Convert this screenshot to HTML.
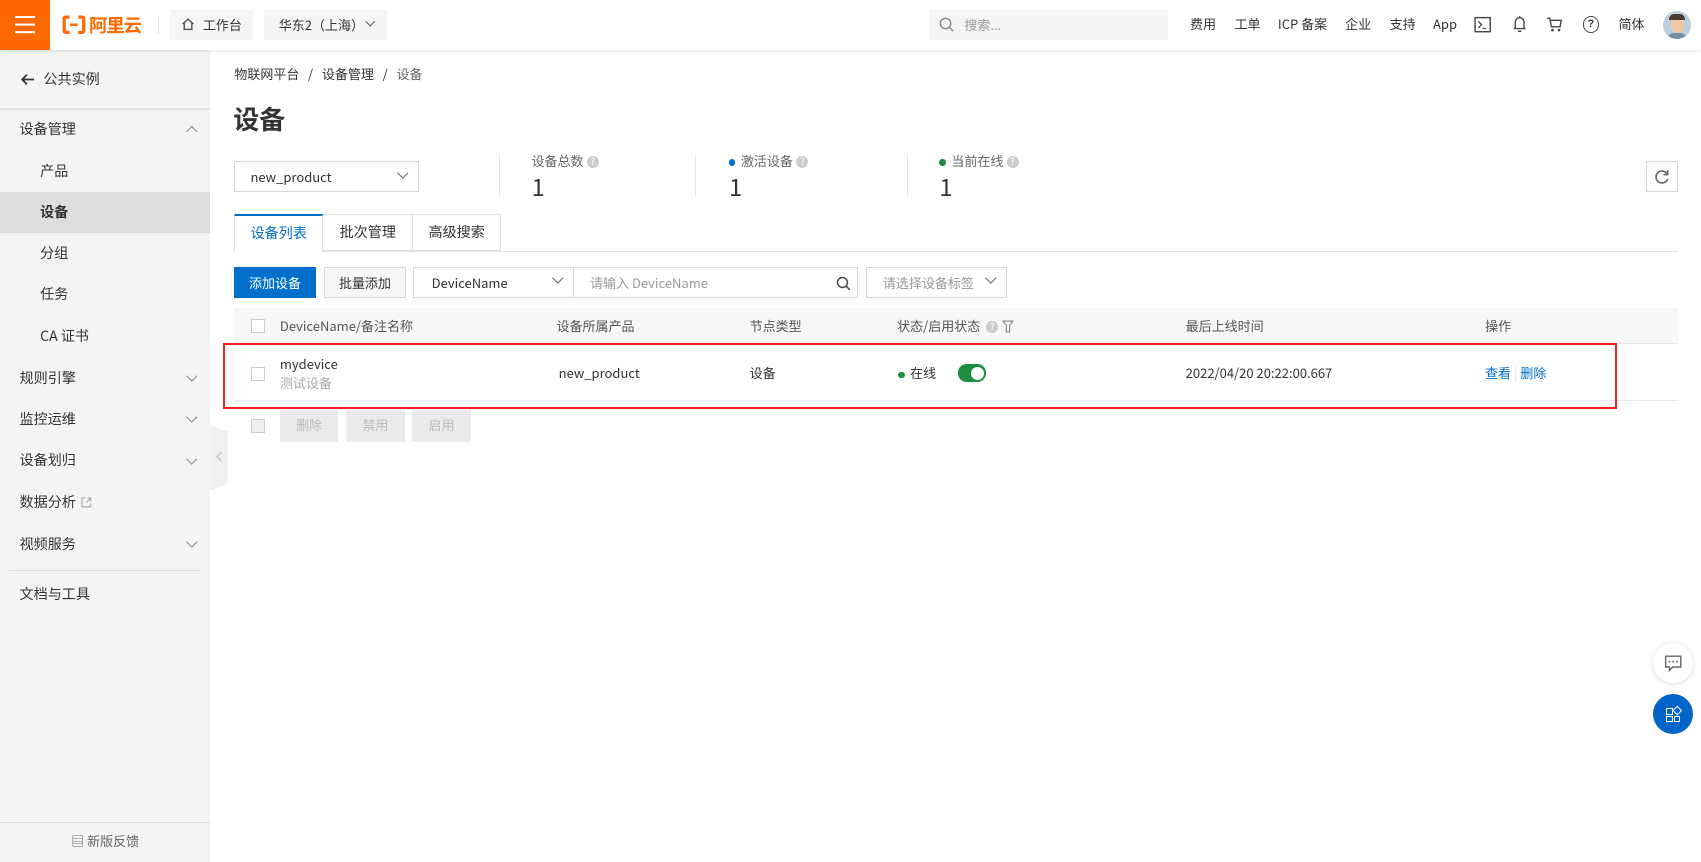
<!DOCTYPE html>
<html><head><meta charset="utf-8"><style>
*{box-sizing:border-box;margin:0;padding:0}
html,body{width:1701px;height:862px;overflow:hidden;background:#fff}
#w{zoom:1.0848;width:1568px;height:795px;position:relative;font-family:"Noto Sans CJK SC","Liberation Sans",sans-serif;font-size:12px;line-height:16px;color:#333}
.a{position:absolute}
.hd{left:0;top:0;width:1568px;height:46px;background:#fff;box-shadow:0 1px 4px rgba(0,0,0,.15);z-index:5}
.sb{left:0;top:46px;width:194px;height:749px;background:#f4f4f4}
.si{position:absolute;left:18px;font-size:13px;color:#333;line-height:16px}
.ch{position:absolute;left:173px;width:7px;height:7px;border-right:1.2px solid #888;border-bottom:1.2px solid #888;transform:rotate(45deg)}
.nv{top:14px;font-size:12px;color:#333;line-height:16px}
.btn{position:absolute;height:29px;line-height:27px;text-align:center;border:1px solid #d7d7d7;background:#f7f7f7;font-size:12px}
.th{position:absolute;top:292px;color:#555}
.cb{position:absolute;width:13px;height:13px;border:1px solid #ccc;background:#fff}
.dd{position:absolute;width:7px;height:7px;border-right:1.2px solid #666;border-bottom:1.2px solid #666;transform:rotate(45deg)}
.q{display:inline-block;width:11px;height:11px;border-radius:50%;background:#ccc;color:#fff;font-size:9px;line-height:11px;text-align:center;vertical-align:middle;margin-left:3px}
</style></head><body><div id="w">
<div class="a hd">
 <div class="a" style="left:0;top:0;width:46px;height:46px;background:#ff6a00"></div>
 <div class="a" style="left:14px;top:15px;width:18px;height:2px;background:#fff;box-shadow:0 7px 0 #fff,0 14px 0 #fff"></div>
 <svg class="a" style="left:57px;top:14px" width="22" height="18" viewBox="0 0 22 18"><path d="M7 2H3.5Q2 2 2 3.5v11Q2 16 3.5 16H7M15 2h3.5Q20 2 20 3.5v11q0 1.5-1.5 1.5H15" fill="none" stroke="#ff6a00" stroke-width="3"/><rect x="7.5" y="7.8" width="7" height="2.4" fill="#ff6a00"/></svg>
 <div class="a" style="left:82px;top:11px;font-size:17px;line-height:24px;font-weight:bold;color:#ff6a00;letter-spacing:-1px">阿里云</div>
 <div class="a" style="left:146px;top:15px;width:1px;height:16px;background:#e0e0e0"></div>
 <div class="a" style="left:157px;top:9px;width:76px;height:28px;background:#f5f5f6;line-height:28px;padding-left:30px;color:#333">工作台</div>
 <svg class="a" style="left:167px;top:16px" width="13" height="13" viewBox="0 0 13 13"><path d="M1.5 6.5 6.5 2l5 4.5M3 5.5V11.5h7V5.5" fill="none" stroke="#555" stroke-width="1.3"/></svg>
 <div class="a" style="left:243px;top:9px;width:114px;height:28px;background:#f5f5f6;line-height:28px;padding-left:14px;color:#333">华东2（上海）</div>
 <div class="dd" style="left:338px;top:17px;width:6px;height:6px;border-color:#555"></div>
 <div class="a" style="left:856px;top:9px;width:221px;height:28px;background:#f5f5f6;line-height:28px;padding-left:33px;color:#999">搜索...</div>
 <svg class="a" style="left:866px;top:16px" width="14" height="14" viewBox="0 0 14 14"><circle cx="6" cy="6" r="4.8" fill="none" stroke="#888" stroke-width="1.3"/><path d="M9.5 9.5 13 13" stroke="#888" stroke-width="1.3"/></svg>
 <div class="a nv" style="left:1097px">费用</div>
 <div class="a nv" style="left:1138px">工单</div>
 <div class="a nv" style="left:1178px">ICP 备案</div>
 <div class="a nv" style="left:1240px">企业</div>
 <div class="a nv" style="left:1281px">支持</div>
 <div class="a nv" style="left:1321px">App</div>
 <svg class="a" style="left:1359px;top:15px" width="16" height="16" viewBox="0 0 16 16"><rect x="1" y="1.5" width="14" height="13" fill="none" stroke="#444" stroke-width="1.3"/><path d="M4 5l3 3-3 3M8 11.5h3" fill="none" stroke="#444" stroke-width="1.2"/></svg>
 <svg class="a" style="left:1393px;top:14px" width="16" height="17" viewBox="0 0 16 17"><path d="M4 12V6.5a4 4 0 0 1 8 0V12M2.5 12.5h11M6.5 15h3M8 1v1.5" fill="none" stroke="#444" stroke-width="1.3"/></svg>
 <svg class="a" style="left:1425px;top:15px" width="16" height="16" viewBox="0 0 16 16"><path d="M1 2h2.5l1.5 8h8l1-6H4.2" fill="none" stroke="#444" stroke-width="1.3"/><circle cx="6" cy="13" r="1.2" fill="#444"/><circle cx="12" cy="13" r="1.2" fill="#444"/></svg>
 <div class="a" style="left:1459px;top:15px;width:15px;height:15px;border:1.3px solid #444;border-radius:50%;font-size:10px;line-height:13px;text-align:center;font-weight:bold;font-family:'Liberation Sans',sans-serif">?</div>
 <div class="a nv" style="left:1492px">简体</div>
 <div class="a" style="left:1533px;top:10px;width:26px;height:26px;border-radius:50%;background:#b9cfdc;overflow:hidden"><div class="a" style="left:7px;top:5px;width:12px;height:15px;border-radius:6px;background:#f1c9a5"></div><div class="a" style="left:6px;top:3px;width:14px;height:5px;border-radius:5px 5px 0 0;background:#4a3a30"></div><div class="a" style="left:3px;top:20px;width:20px;height:10px;border-radius:8px 8px 0 0;background:#6d8ea3"></div></div>
</div>
<div class="a sb">
 <svg class="a" style="left:18px;top:21px" width="14" height="12" viewBox="0 0 14 12"><path d="M13 6H2M6.5 1.5 2 6l4.5 4.5" fill="none" stroke="#333" stroke-width="1.6"/></svg>
 <div class="si" style="top:19px;left:40px">公共实例</div>
 <div class="a" style="left:0;top:54px;width:194px;height:1px;background:#e3e3e3"></div>
 <div class="si" style="top:66px">设备管理</div><div class="ch" style="top:72px;transform:rotate(225deg)"></div>
 <div class="si" style="top:104px;left:37px">产品</div>
 <div class="a" style="left:0;top:131px;width:194px;height:38px;background:#dedede"></div>
 <div class="si" style="top:142px;left:37px;font-weight:bold">设备</div>
 <div class="si" style="top:180px;left:37px">分组</div>
 <div class="si" style="top:218px;left:37px">任务</div>
 <div class="si" style="top:256px;left:37px">CA 证书</div>
 <div class="si" style="top:295px">规则引擎</div><div class="ch" style="top:297px"></div>
 <div class="si" style="top:333px">监控运维</div><div class="ch" style="top:335px"></div>
 <div class="si" style="top:371px">设备划归</div><div class="ch" style="top:373px"></div>
 <div class="si" style="top:409px">数据分析</div>
 <svg class="a" style="left:75px;top:412px" width="10" height="10" viewBox="0 0 10 10"><path d="M4 1H1v8h8V6M6 1h3v3M9 1 5 5" fill="none" stroke="#aaa" stroke-width="1.1"/></svg>
 <div class="si" style="top:448px">视频服务</div><div class="ch" style="top:450px"></div>
 <div class="a" style="left:8px;top:479px;width:176px;height:1px;background:#ddd"></div>
 <div class="si" style="top:494px">文档与工具</div>
 <div class="a" style="left:0;top:712px;width:194px;height:1px;background:#ddd"></div>
 <div class="a" style="left:0;top:721px;width:194px;text-align:center;color:#666;font-size:12px">▤ 新版反馈</div>
</div>
<div class="a" style="left:194px;top:392px;width:16px;height:60px;background:#f0f0f0;clip-path:polygon(0 0,100% 10%,100% 90%,0 100%)"></div>
<div class="a" style="left:201px;top:418px;width:6px;height:6px;border-left:1.3px solid #bbb;border-bottom:1.3px solid #bbb;transform:rotate(45deg)"></div>

<div class="a" style="left:216px;top:60px;font-size:12px">物联网平台 &nbsp;&nbsp;/&nbsp;&nbsp; 设备管理 &nbsp;&nbsp;/&nbsp;&nbsp; <span style="color:#666">设备</span></div>
<div class="a" style="left:215px;top:94px;font-size:24px;line-height:32px;font-weight:bold;color:#333">设备</div>
<div class="a" style="left:216px;top:148px;width:170px;height:29px;border:1px solid #d7d7d7;line-height:27px;padding-left:14px">new_product</div>
<div class="dd" style="left:368px;top:156px"></div>
<div class="a" style="left:460px;top:142px;width:1px;height:40px;background:#e8e8e8"></div>
<div class="a" style="left:641px;top:142px;width:1px;height:40px;background:#e8e8e8"></div>
<div class="a" style="left:836px;top:142px;width:1px;height:40px;background:#e8e8e8"></div>
<div class="a" style="left:490px;top:140px;color:#666">设备总数<span class="q">?</span></div>
<div class="a" style="left:672px;top:140px;color:#666"><span style="display:inline-block;width:6px;height:6px;border-radius:50%;background:#0070cc;vertical-align:middle;margin-right:5px"></span>激活设备<span class="q">?</span></div>
<div class="a" style="left:866px;top:140px;color:#666"><span style="display:inline-block;width:6px;height:6px;border-radius:50%;background:#1e8e3e;vertical-align:middle;margin-right:5px"></span>当前在线<span class="q">?</span></div>
<div class="a" style="left:490px;top:159px;font-size:22px;line-height:26px;color:#333">1</div>
<div class="a" style="left:672px;top:159px;font-size:22px;line-height:26px;color:#333">1</div>
<div class="a" style="left:866px;top:159px;font-size:22px;line-height:26px;color:#333">1</div>
<div class="btn" style="left:1517px;top:148px;width:30px;background:#fff"></div>
<svg class="a" style="left:1524px;top:155px" width="16" height="16" viewBox="0 0 16 16"><path d="M13 5.5A5.5 5.5 0 1 0 13.5 10" fill="none" stroke="#666" stroke-width="1.5"/><path d="M13.5 2v4h-4" fill="none" stroke="#666" stroke-width="1.5"/></svg>

<div class="a" style="left:216px;top:231px;width:1331px;height:1px;background:#e0e0e0"></div>
<div class="a" style="left:216px;top:197px;width:82px;height:35px;border:1px solid #e0e0e0;border-top:2px solid #0070cc;border-bottom:none;background:#fff;text-align:center;line-height:32px;color:#0070cc;font-size:13px">设备列表</div>
<div class="a" style="left:298px;top:197px;width:83px;height:34px;border:1px solid #e0e0e0;border-left:none;text-align:center;line-height:33px;font-size:13px">批次管理</div>
<div class="a" style="left:380px;top:197px;width:82px;height:34px;border:1px solid #e0e0e0;text-align:center;line-height:33px;font-size:13px">高级搜索</div>

<div class="btn" style="left:216px;top:246px;width:75px;background:#0070cc;border-color:#0070cc;color:#fff">添加设备</div>
<div class="btn" style="left:299px;top:246px;width:75px">批量添加</div>
<div class="btn" style="left:381px;top:246px;width:148px;background:#fff;text-align:left;padding-left:16px">DeviceName</div>
<div class="dd" style="left:511px;top:253px"></div>
<div class="btn" style="left:528px;top:246px;width:263px;background:#fff;text-align:left;padding-left:15px;color:#999">请输入 DeviceName</div>
<svg class="a" style="left:771px;top:254px" width="14" height="14" viewBox="0 0 14 14"><circle cx="6" cy="6" r="4.6" fill="none" stroke="#444" stroke-width="1.3"/><path d="M9.4 9.4 12.8 12.8" stroke="#444" stroke-width="1.4"/></svg>
<div class="btn" style="left:798px;top:246px;width:130px;background:#fff;text-align:left;padding-left:15px;color:#999">请选择设备标签</div>
<div class="dd" style="left:910px;top:253px"></div>

<div class="a" style="left:216px;top:284px;width:1331px;height:33px;background:#f7f7f7;border-bottom:1px solid #e8e8e8"></div>
<div class="cb" style="left:231px;top:294px"></div>
<div class="th" style="left:258px">DeviceName/备注名称</div>
<div class="th" style="left:513px">设备所属产品</div>
<div class="th" style="left:691px">节点类型</div>
<div class="th" style="left:827px">状态/启用状态 <span class="q" style="margin:0 3px">?</span></div>
<svg class="a" style="left:924px;top:295px" width="11" height="12" viewBox="0 0 11 12"><path d="M1 1h9L7 5v6H4V5z" fill="none" stroke="#888" stroke-width="1.1"/></svg>
<div class="th" style="left:1093px">最后上线时间</div>
<div class="th" style="left:1369px">操作</div>
<div class="a" style="left:216px;top:369px;width:1331px;height:1px;background:#e8e8e8"></div>
<div class="cb" style="left:231px;top:338px"></div>
<div class="a" style="left:258px;top:327px">mydevice</div>
<div class="a" style="left:258px;top:345px;color:#aaa">测试设备</div>
<div class="a" style="left:515px;top:336px">new_product</div>
<div class="a" style="left:691px;top:336px">设备</div>
<div class="a" style="left:828px;top:336px"><span style="display:inline-block;width:6px;height:6px;border-radius:50%;background:#1e8e3e;vertical-align:middle;margin-right:5px"></span>在线</div>
<div class="a" style="left:883px;top:336px;width:26px;height:16px;border-radius:8px;background:#1e8e3e"><div class="a" style="left:12px;top:2px;width:12px;height:12px;border-radius:50%;background:#fff"></div></div>
<div class="a" style="left:1093px;top:336px">2022/04/20 20:22:00.667</div>
<div class="a" style="left:1369px;top:336px;color:#0070cc">查看 <span style="color:#ddd">|</span> 删除</div>
<div class="a" style="left:206px;top:316px;width:1285px;height:61px;border:2px solid #f5221b"></div>

<div class="cb" style="left:231px;top:386px;background:#eee"></div>
<div class="btn" style="left:258px;top:378px;width:54px;background:#ebebeb;border:none;color:#bbb">删除</div>
<div class="btn" style="left:319px;top:378px;width:54px;background:#ebebeb;border:none;color:#bbb">禁用</div>
<div class="btn" style="left:380px;top:378px;width:54px;background:#ebebeb;border:none;color:#bbb">启用</div>

<div class="a" style="left:1524px;top:593px;width:37px;height:37px;border-radius:50%;background:#fff;box-shadow:0 1px 5px rgba(0,0,0,.15)">
 <svg class="a" style="left:10px;top:10px" width="17" height="17" viewBox="0 0 17 17"><path d="M1.5 2h14v10H8l-3 3v-3H1.5z" fill="none" stroke="#666" stroke-width="1.3"/><circle cx="5" cy="7" r=".9" fill="#666"/><circle cx="8.5" cy="7" r=".9" fill="#666"/><circle cx="12" cy="7" r=".9" fill="#666"/></svg>
</div>
<div class="a" style="left:1524px;top:640px;width:37px;height:37px;border-radius:50%;background:#0064c8">
 <div class="a" style="left:12px;top:13px;width:6px;height:6px;border:1.2px solid #fff"></div>
 <div class="a" style="left:12px;top:20px;width:6px;height:6px;border:1.2px solid #fff"></div>
 <div class="a" style="left:19px;top:20px;width:6px;height:6px;border:1.2px solid #fff"></div>
 <div class="a" style="left:19px;top:12px;width:6px;height:6px;border:1.2px solid #fff;transform:rotate(45deg)"></div>
</div>
</div></body></html>
